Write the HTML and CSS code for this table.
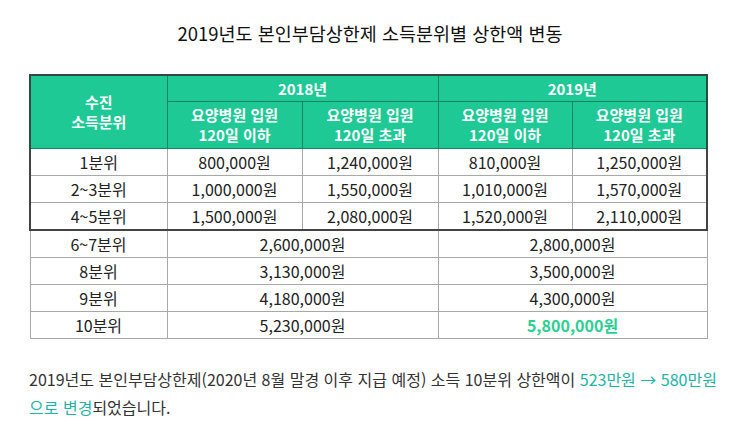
FILE: index.html
```html
<!DOCTYPE html>
<html lang="ko">
<head>
<meta charset="utf-8">
<link rel="stylesheet" href="styles.css">
</head>
<body>
<div class="page">
  <h2 class="title">2019년도 본인부담상한제 소득분위별 상한액 변동</h2>
  <table class="cap">
    <colgroup>
      <col class="c1"><col class="c2"><col class="c3"><col class="c4"><col class="c5">
    </colgroup>
    <thead>
      <tr class="h1">
        <th rowspan="2" class="edge-l">수진<br>소득분위</th>
        <th colspan="2">2018년</th>
        <th colspan="2" class="edge-r">2019년</th>
      </tr>
      <tr class="h2">
        <th>요양병원 입원<br>120일 이하</th>
        <th>요양병원 입원<br>120일 초과</th>
        <th>요양병원 입원<br>120일 이하</th>
        <th class="edge-r">요양병원 입원<br>120일 초과</th>
      </tr>
    </thead>
    <tbody>
      <tr class="top">
        <td class="edge-l">1분위</td><td>800,000원</td><td>1,240,000원</td><td>810,000원</td><td class="edge-r">1,250,000원</td>
      </tr>
      <tr class="top">
        <td class="edge-l">2~3분위</td><td>1,000,000원</td><td>1,550,000원</td><td>1,010,000원</td><td class="edge-r">1,570,000원</td>
      </tr>
      <tr class="top last">
        <td class="edge-l">4~5분위</td><td>1,500,000원</td><td>2,080,000원</td><td>1,520,000원</td><td class="edge-r">2,110,000원</td>
      </tr>
      <tr>
        <td>6~7분위</td><td colspan="2">2,600,000원</td><td colspan="2">2,800,000원</td>
      </tr>
      <tr>
        <td>8분위</td><td colspan="2">3,130,000원</td><td colspan="2">3,500,000원</td>
      </tr>
      <tr>
        <td>9분위</td><td colspan="2">4,180,000원</td><td colspan="2">4,300,000원</td>
      </tr>
      <tr>
        <td>10분위</td><td colspan="2">5,230,000원</td><td colspan="2" class="hl">5,800,000원</td>
      </tr>
    </tbody>
  </table>
  <p class="desc">2019년도 본인부담상한제(2020년 8월 말경 이후 지급 예정) 소득 10분위 상한액이 <span class="accent">523만원 → 580만원</span> <span class="accent">으로 변경</span>되었습니다.</p>
</div>
</body>
</html>
```
FILE: styles.css
```css
html, body {
  margin: 0;
  padding: 0;
  background: #ffffff;
}
body {
  font-family: "Noto Sans CJK KR", "Noto Sans", sans-serif;
  color: #222;
}
.page {
  width: 740px;
  padding-top: 20px;
}
.title {
  margin: 0;
  text-align: center;
  font-size: 18.5px;
  font-weight: 400;
  line-height: 26px;
  color: #111;
}
.cap {
  margin: 28px 0 0 29px;
  border-collapse: collapse;
  table-layout: fixed;
  width: 677px;
}
.c1 { width: 137px; }
.c2 { width: 135px; }
.c3 { width: 136px; }
.c4 { width: 134px; }
.c5 { width: 135px; }
.cap th {
  background: #1ec995;
  color: #fff;
  font-weight: 700;
  font-size: 15px;
  line-height: 20px;
  padding: 0;
  border: 1px solid #16845f;
  text-align: center;
}
.cap .h1 th {
  border-top: 2px solid #2f4a3f;
  height: 25px;
}
.cap .h2 th {
  height: 46px;
}
.cap th.edge-l { border-left: 2px solid #2f4a3f; }
.cap th.edge-r { border-right: 2px solid #2f4a3f; }
.cap td {
  height: 26px;
  padding: 0;
  text-align: center;
  font-size: 16px;
  line-height: 20px;
  color: #222;
  border: 1px solid #a8a8a8;
}
.cap tr.top td.edge-l { border-left: 2px solid #444; }
.cap tr.top td.edge-r { border-right: 2px solid #444; }
.cap tr.last td { border-bottom: 2px solid #444; }
.cap td.hl {
  color: #2bcf92;
  font-weight: 700;
}
.desc {
  margin: 26px 0 0 29px;
  max-width: 690px;
  font-size: 16px;
  line-height: 28px;
  color: #333;
}
.accent {
  color: #22b3a4;
}
```
